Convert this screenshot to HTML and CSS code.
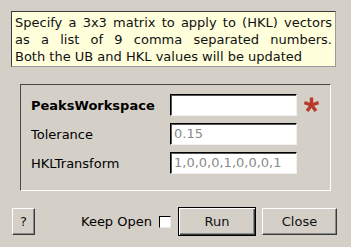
FILE: index.html
```html
<!DOCTYPE html>
<html lang="en">
<head>
    <meta charset="UTF-8">
    <title>Algorithm dialog</title>
    <link rel="stylesheet" href="styles.css">
</head>
<body>
    <div class="dialog">
        <div class="tip">
            <span class="tip-line">Specify a 3x3 matrix to apply to (HKL) vectors</span>
            <span class="tip-line">as a list of 9 comma separated numbers.</span>
            <span class="tip-last">Both the UB and HKL values will be updated</span>
        </div>

        <div class="group">
            <div class="row">
                <label class="label label-bold">PeaksWorkspace</label>
                <div class="field"></div>
                <svg class="required" width="17" height="16" viewBox="-8.5 -8 17 16">
                    <path d="M0 0 L0 -7.5" />
                    <path d="M0 0 L7.1 -2.3" />
                    <path d="M0 0 L4.4 6.1" />
                    <path d="M0 0 L-4.4 6.1" />
                    <path d="M0 0 L-7.1 -2.3" />
                </svg>
            </div>
            <div class="row">
                <label class="label">Tolerance</label>
                <div class="field">0.15</div>
            </div>
            <div class="row">
                <label class="label">HKLTransform</label>
                <div class="field">1,0,0,0,1,0,0,0,1</div>
            </div>
        </div>

        <div class="actions">
            <button class="btn btn-help">?</button>
            <span class="keep">Keep Open</span>
            <span class="check"></span>
            <button class="btn btn-run">Run</button>
            <button class="btn btn-close">Close</button>
        </div>
    </div>
</body>
</html>
```

FILE: styles.css
```css
* {
    margin: 0;
    padding: 0;
    box-sizing: border-box;
}

body {
    background: #d4d0c8;
    font-family: "DejaVu Sans", sans-serif;
    font-size: 13px;
    color: #000;
}

.dialog {
    display: flex;
    flex-direction: column;
    padding-top: 11px;
}

/* description box */
.tip {
    margin-left: 11px;
    width: 325px;
    height: 56px;
    padding: 2px 3px 0 3px;
    background: #ffffdc;
    border: 1px solid;
    border-color: #3c3c3c #9a9a9a #9a9a9a #3c3c3c;
    line-height: 17px;
    color: #111;
}

.tip-line {
    display: block;
    text-align: justify;
    text-align-last: justify;
}

.tip-last {
    display: block;
}

/* property group */
.group {
    margin: 17px 0 0 20px;
    width: 311px;
    height: 107px;
    padding: 9px 0 0 10px;
    border: 1px solid;
    border-color: #4a4a4a #fff #fff #4a4a4a;
    display: flex;
    flex-direction: column;
    gap: 7px;
}

.row {
    display: flex;
    align-items: center;
    height: 22px;
}

.label {
    width: 139px;
}

.label-bold {
    font-weight: bold;
}

.field {
    width: 127px;
    height: 22px;
    padding: 0 3px;
    line-height: 20px;
    background: #fff;
    color: #8a8a8a;
    border: 1px solid;
    border-color: #000 #f0f0f0 #f0f0f0 #000;
    box-shadow: inset 1px 1px 0 #555;
}

.required {
    margin-left: 6px;
    stroke: #b83a2c;
    stroke-width: 3.4;
    stroke-linecap: butt;
}

/* bottom buttons */
.actions {
    display: flex;
    align-items: center;
    margin: 16px 0 0 12px;
    height: 29px;
}

.btn {
    font-family: inherit;
    font-size: 13px;
    color: #111;
    background: #d4d0c8;
    height: 27px;
    border: 1px solid;
    border-color: #fff #3a3a3a #3a3a3a #fff;
    box-shadow: inset -1px -1px 0 #8a8a8a;
}

.btn-help {
    width: 23px;
}

.keep {
    margin-left: 46px;
}

.check {
    width: 12px;
    height: 12px;
    margin-left: 7px;
    background: #fff;
    border: 1px solid;
    border-color: #000 #e8e8e8 #e8e8e8 #000;
}

.btn-run {
    margin-left: 7px;
    width: 78px;
    height: 29px;
    border-color: #000;
    box-shadow: inset 1px 1px 0 #fff, inset -1px -1px 0 #3a3a3a, inset -2px -2px 0 #8a8a8a;
}

.btn-close {
    margin-left: 6px;
    width: 75px;
}
```
